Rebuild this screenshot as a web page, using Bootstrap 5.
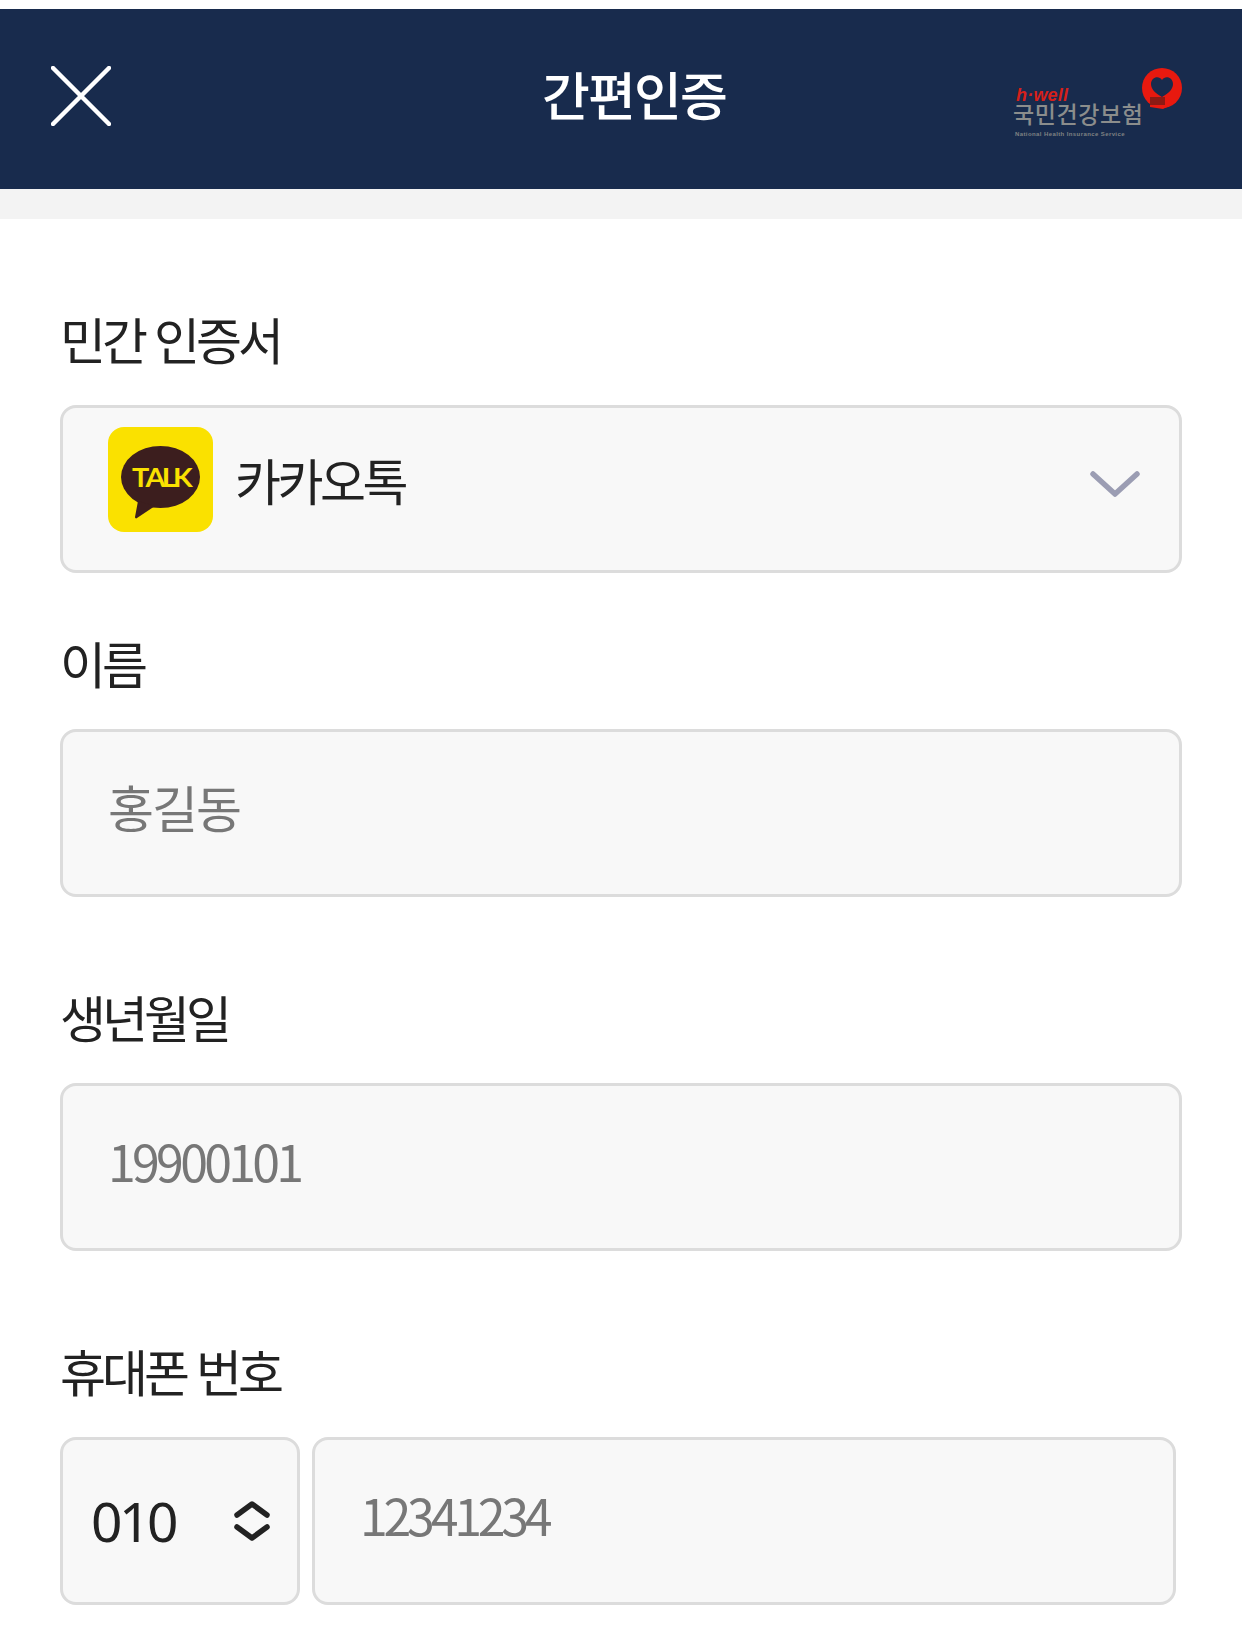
<!DOCTYPE html>
<html lang="ko">
<head>
<meta charset="utf-8">
<title>간편인증</title>
<link href="https://cdn.jsdelivr.net/npm/bootstrap@5.3.0/dist/css/bootstrap.min.css" rel="stylesheet">
<style>
    body {
        font-family: "Noto Sans CJK KR", "Noto Sans", sans-serif;
        color: #222;
        background: #fff;
        padding-top: 9px;
    }

    .top-bar {
        height: 180px;
        background: #182b4d;
        padding: 0 59px 0 51px;
    }

    .close-icon {
        margin-bottom: 6px;
    }

    .top-title {
        font-size: 52px;
        font-weight: 500;
        letter-spacing: -1.8px;
        line-height: 1;
        color: #fff;
        margin-left: 431px;
        padding-bottom: 10px;
    }

    .top-gap {
        height: 30px;
        background: #f3f3f3;
    }

    .auth-form {
        padding: 0 60px;
    }

    .field-row {
        padding-top: 89px;
    }

    .field-row-tight {
        padding-top: 59px;
    }

    .field-label {
        font-size: 50px;
        line-height: 60px;
        letter-spacing: -4px;
        font-weight: 400;
        margin: 0 0 37px;
    }

    .field-box,
    .field-box.form-control {
        height: 168px;
        background: #f8f8f8;
        border: 3px solid #dcdcdc;
        border-radius: 16px;
        font-size: 50px;
        color: #222;
        letter-spacing: -3.5px;
    }

    .field-box.form-control {
        padding: 0 0 14px 45px;
        letter-spacing: -2px;
    }

    .field-box.form-control.num-input {
        letter-spacing: -3.7px;
    }

    .field-box.form-control.phone-input {
        letter-spacing: -4.2px;
    }

    .field-box.form-control::placeholder {
        color: #777;
        opacity: 1;
    }

    .kakao-icon {
        width: 105px;
        height: 105px;
        margin-left: 45px;
        margin-right: 22px;
        margin-bottom: 19px;
        background: #fae100;
        border-radius: 16px;
    }

    .talk-text {
        font-family: Lato, sans-serif;
        font-size: 27px;
        font-weight: 700;
        font-kerning: none;
    }

    .provider-name {
        margin-bottom: 20px;
    }

    .provider-arrow {
        margin-right: 39px;
        margin-bottom: 10px;
    }

    .phone-row {
        gap: 12px;
        margin-right: 6px;
    }

    .phone-code {
        width: 240px;
        font-family: "Noto Sans", sans-serif;
        font-size: 55px;
        letter-spacing: -3.5px;
        padding: 0 27px 0 28px;
    }
</style>
</head>
<body>
    <header class="top-bar d-flex align-items-center">
        <svg class="close-icon flex-shrink-0" width="60" height="60" viewBox="0 0 60 60" fill="none" stroke="#fff" stroke-width="4.5" stroke-linecap="round">
            <path d="M2 2 58 58M58 2 2 58"/>
        </svg>
        <h1 class="top-title mb-0">간편인증</h1>
        <svg class="ms-auto flex-shrink-0" width="170" height="80" viewBox="0 0 170 80">
            <circle cx="149" cy="29" r="20" fill="#e8190f"/>
            <path d="M149 38c-7-4-11-8-11-13 0-7 8-9 11-4 3-5 11-3 11 4 0 5-4 9-11 13Z" fill="#182b4d"/>
            <path d="M137 39 152 38 162 44 150 50 137 48Z" fill="#e8190f"/>
            <path d="M137 38h15v8h-15Z" fill="#8c1a14"/>
            <text x="3" y="42" font-family="Liberation Sans" font-size="18" font-style="italic" font-weight="700" letter-spacing=".2" fill="#d5201a">h·well</text>
            <text x="0" y="64" font-family="Noto Sans CJK KR" font-size="23" font-weight="500" letter-spacing=".6" fill="#8b8d8c">국민건강보험</text>
            <text x="2" y="77" font-family="Liberation Sans" font-size="6" font-weight="700" letter-spacing=".4" fill="#7f8283">National Health Insurance Service</text>
        </svg>
    </header>
    <div class="top-gap"></div>

    <main class="auth-form">
        <section class="field-row">
            <h2 class="field-label">민간 인증서</h2>
            <div class="field-box d-flex align-items-center">
                <div class="kakao-icon flex-shrink-0">
                    <svg class="d-block" width="105" height="105" viewBox="0 0 105 105">
                        <ellipse cx="52.5" cy="50" rx="39.5" ry="31" fill="#3c1e1e"/>
                        <path d="M30 74 27 90c0 1 1 2 2 1l18-12Z" fill="#3c1e1e"/>
                        <text class="talk-text" x="24" y="60" textLength="57" lengthAdjust="spacingAndGlyphs" fill="#fae100">TALK</text>
                    </svg>
                </div>
                <span class="provider-name">카카오톡</span>
                <svg class="provider-arrow ms-auto" width="50" height="26" viewBox="0 0 50 26" fill="none" stroke="#9b9db3" stroke-width="5.5" stroke-linecap="round" stroke-linejoin="round">
                    <path d="M3 3 25 23 47 3"/>
                </svg>
            </div>
        </section>

        <section class="field-row-tight">
            <h2 class="field-label">이름</h2>
            <input class="field-box form-control" type="text" placeholder="홍길동">
        </section>

        <section class="field-row">
            <h2 class="field-label">생년월일</h2>
            <input class="field-box form-control num-input" type="text" placeholder="19900101">
        </section>

        <section class="field-row">
            <h2 class="field-label">휴대폰 번호</h2>
            <div class="phone-row d-flex">
                <div class="field-box phone-code d-flex align-items-center justify-content-between flex-shrink-0">
                    <span>010</span>
                    <svg width="36" height="40" viewBox="0 0 36 40" fill="none" stroke="#222" stroke-width="5.5" stroke-linecap="round" stroke-linejoin="round">
                        <path d="M3 14 18 3 33 14M3 26 18 37 33 26"/>
                    </svg>
                </div>
                <input class="field-box form-control phone-input" type="text" placeholder="12341234">
            </div>
        </section>
    </main>

    <script src="https://cdn.jsdelivr.net/npm/bootstrap@5.3.0/dist/js/bootstrap.bundle.min.js"></script>
</body>
</html>
